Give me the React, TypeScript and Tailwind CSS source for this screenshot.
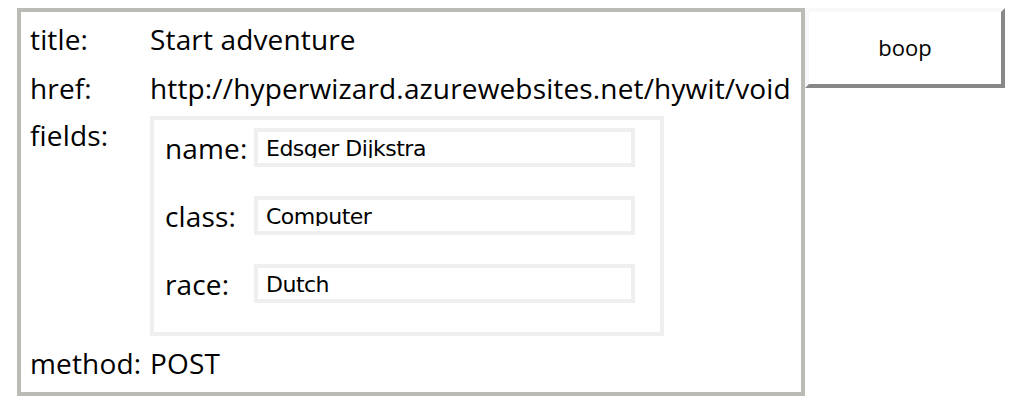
import React from "react";

const fields = [
  { label: "name:", value: "Edsger Dijkstra" },
  { label: "class:", value: "Computer" },
  { label: "race:", value: "Dutch" },
];

function FieldInput({ value }: { value: string }) {
  return (
    <div className="h-[39px] w-[381px] border-4 border-[#efefef] bg-white pl-[8px] pt-[5px]">
      <div className="h-[21px] overflow-hidden font-['DejaVu_Sans',sans-serif] text-[22px] leading-[24px] tracking-[-0.5px] text-black">
        {value}
      </div>
    </div>
  );
}

export default function App() {
  return (
    <main className="flex min-h-[412px] items-start bg-white pl-[17px] pt-[8px] font-['Open_Sans',sans-serif] text-[28px] text-black">
      <div className="h-[388px] w-[788px] border-4 border-[#babbb5] pl-[9px]">
        <div className="grid grid-cols-[120px_1fr] leading-[38px] tracking-[0.15px]">
          <div className="flex h-[54px] items-center">title:</div>
          <div className="flex h-[54px] items-center">Start adventure</div>

          <div className="flex h-[44px] items-center">href:</div>
          <div className="flex h-[44px] items-center whitespace-nowrap">
            http://hyperwizard.azurewebsites.net/hywit/void
          </div>

          <div className="h-[232px] pt-[6px]">fields:</div>
          <div className="h-[232px] pt-[6px]">
            <div className="h-[220px] w-[514px] border-4 border-[#efefef] pl-[11px] pt-[8px]">
              <div className="flex flex-col gap-[29px]">
                {fields.map((f) => (
                  <div key={f.label} className="flex items-center">
                    <span className="w-[89px]">{f.label}</span>
                    <FieldInput value={f.value} />
                  </div>
                ))}
              </div>
            </div>
          </div>

          <div className="flex h-[42px] items-center">method:</div>
          <div className="flex h-[42px] items-center">POST</div>
        </div>
      </div>
      <button className="flex h-[80px] w-[200px] items-center justify-center border-4 border-t-[#f8f8f8] border-l-[#f8f8f8] border-r-[#888888] border-b-[#888888] bg-white pb-[2px] text-[22px]">
        boop
      </button>
    </main>
  );
}
